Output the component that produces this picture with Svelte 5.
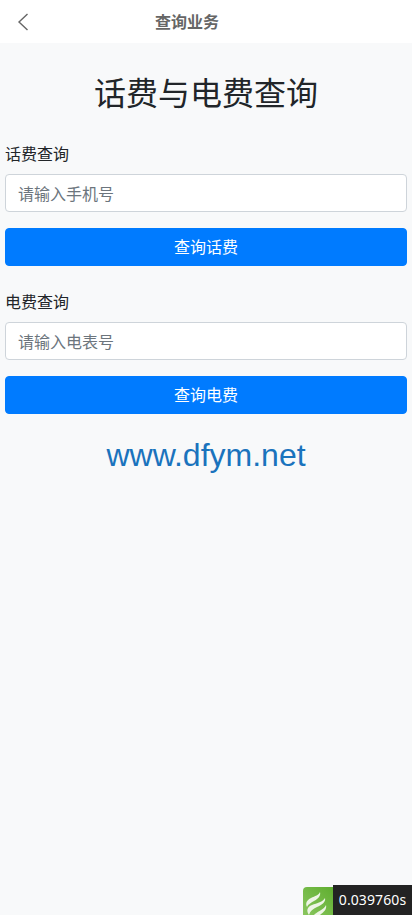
<script lang="ts">
  const sections = [
    { label: '话费查询', placeholder: '请输入手机号', action: '查询话费' },
    { label: '电费查询', placeholder: '请输入电表号', action: '查询电费' }
  ];
</script>

<div class="page">
  <header class="topbar">
    <svg class="back" width="12" height="18" viewBox="0 0 12 18" aria-hidden="true">
      <path d="M10.5 1 L2 9 L10.5 17" fill="none" stroke="#666" stroke-width="1.4" />
    </svg>
    <span class="topbar-title">查询业务</span>
  </header>

  <main class="content">
    <h1>话费与电费查询</h1>

    {#each sections as s}
      <section class="group">
        <label for={s.action}>{s.label}</label>
        <input id={s.action} type="text" placeholder={s.placeholder} />
        <button type="button">{s.action}</button>
      </section>
    {/each}

    <p class="site">www.dfym.net</p>
  </main>

  <div class="timer">
    <span class="logo">
      <svg width="30" height="28" viewBox="0 0 30 28" aria-hidden="true">
        <defs>
          <linearGradient id="leaf" x1="1" y1="0" x2="0" y2="1">
            <stop offset="0" stop-color="#5fae2f" />
            <stop offset="1" stop-color="#8ac65f" />
          </linearGradient>
        </defs>
        <rect width="30" height="28" fill="url(#leaf)" />
        <path d="M17 5 C18 9 15 12 11 14 C8 16 5 17 4 20 C2 16 4 13 8 11 C12 9 16 8 17 5Z" fill="#eef5e6" />
        <path d="M22 11 C23 15 19 18 14 20 C10 22 7 24 6 28 C3 24 4 20 9 18 C14 16 20 15 22 11Z" fill="#eef5e6" />
        <path d="M23 18 C24 22 21 25 17 28 L11 28 C13 25 21 23 23 18Z" fill="#eef5e6" />
      </svg>
    </span>
    <span class="time">0.039760s</span>
  </div>
</div>

<style>
  :global(body) {
    margin: 0;
    background: #f8f9fa;
    font-family: "Liberation Sans", "Noto Sans CJK SC", sans-serif;
  }

  .page {
    min-height: 915px;
    position: relative;
    overflow: hidden;
    color: #212529;
  }

  .topbar {
    height: 43px;
    background: #fff;
    display: flex;
    align-items: center;
    justify-content: center;
    position: relative;
  }

  .back {
    position: absolute;
    left: 17px;
    top: 13px;
  }

  .topbar-title {
    font-size: 16px;
    font-weight: 700;
    color: #666;
    margin-left: -38px;
    padding-bottom: 2px;
  }

  .content {
    padding: 0 5px;
  }

  h1 {
    margin: 0;
    padding-top: 27px;
    height: 73px;
    font-size: 32px;
    line-height: 48px;
    font-weight: 400;
    text-align: center;
  }

  .group {
    display: flex;
    flex-direction: column;
  }

  .group + .group {
    margin-top: 25px;
  }

  label {
    font-size: 16px;
    line-height: 24px;
    margin-bottom: 7px;
  }

  input {
    height: 38px;
    box-sizing: border-box;
    padding: 9px 12px 5px;
    font: inherit;
    font-size: 16px;
    color: #495057;
    background: #fff;
    border: 1px solid #ced4da;
    border-radius: 4px;
    margin-bottom: 16px;
    width: 100%;
  }

  input::placeholder {
    color: #6c757d;
    opacity: 1;
  }

  button {
    height: 38px;
    font: inherit;
    font-size: 16px;
    color: #fff;
    background: #007bff;
    border: 1px solid #007bff;
    border-radius: 4px;
    padding: 0 0 2px;
  }

  .site {
    margin: 0;
    margin-top: 19px;
    font-size: 32px;
    line-height: 44px;
    text-align: center;
    color: #1a73bd;
  }

  .timer {
    position: absolute;
    right: 0;
    bottom: 0;
    display: flex;
    align-items: flex-end;
  }

  .logo {
    width: 30px;
    height: 28px;
    display: block;
    border-radius: 4px 0 0 0;
    overflow: hidden;
  }

  .logo svg {
    display: block;
  }

  .time {
    width: 79px;
    height: 30px;
    background: #232323;
    color: #fff;
    font-size: 14px;
    letter-spacing: 0.1px;
    line-height: 30px;
    text-align: center;
    font-family: "Noto Sans", sans-serif;
  }
</style>
